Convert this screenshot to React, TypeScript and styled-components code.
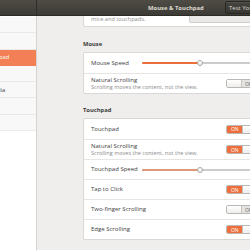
import React from 'react';
import styled, { createGlobalStyle } from 'styled-components';

const Global = createGlobalStyle`
  html, body { margin: 0; padding: 0; }
  body {
    width: 250px; height: 250px; overflow: hidden;
    background: #efeeec;
    font-family: "Open Sans", "Noto Sans", "DejaVu Sans", sans-serif;
    -webkit-font-smoothing: antialiased;
  }
`;

const Window = styled.div`
  width: 250px; height: 250px;
  display: flex; flex-direction: column;
  overflow: hidden;
`;

const HeaderBar = styled.header`
  flex: none;
  height: 16px;
  box-sizing: border-box;
  display: flex;
  background: linear-gradient(#4f4c46, #3d3b36);
  border-bottom: 1px solid #2c2b28;
`;

const HeaderSide = styled.div`
  width: 36px; flex: none;
  border-right: 1px solid #2e2d2a;
`;

const HeaderMain = styled.div`
  flex: 1;
  display: flex; align-items: center;
  padding-left: 111px;
  min-width: 0;
`;

const Title = styled.div`
  flex: none; width: 77px;
  color: #dfdbd2;
  font-weight: 700;
  font-size: 5.9px;
  line-height: 8px;
  white-space: nowrap;
`;

const HeaderButton = styled.div`
  flex: none;
  height: 13px;
  box-sizing: border-box;
  display: flex; align-items: center;
  padding: 0 3px;
  border: 1px solid #27261f;
  border-radius: 2px;
  background: linear-gradient(#46443f, #393733);
  box-shadow: inset 0 1px 0 rgba(255,255,255,0.08);
  color: #dfdbd2;
  font-size: 6px;
  line-height: 8px;
  white-space: nowrap;
`;

const Body = styled.div`
  flex: 1;
  display: flex;
  min-height: 0;
`;

const Sidebar = styled.nav`
  width: 36px; flex: none;
  background: #ffffff;
  border-right: 1px solid #d5d4d2;
  padding-top: 1px;
  overflow: hidden;
`;

const SideRow = styled.div<{ $selected?: boolean }>`
  height: 16.3px;
  box-sizing: border-box;
  display: flex; align-items: center;
  background: ${p => (p.$selected ? '#f27f55' : '#f8f8f8')};
  border-bottom: 1px solid ${p => (p.$selected ? '#f27f55' : '#e9e9e9')};
  color: ${p => (p.$selected ? '#ffffff' : '#3c3c3c')};
  font-size: 5.8px;
  white-space: nowrap;
`;

const SideLabel = styled.span`
  margin-left: -43px;
`;

const Content = styled.main`
  flex: 1;
  padding-left: 46px;
  overflow: hidden;
  min-width: 0;
`;

const Column = styled.div`
  width: 183px;
`;

const Frame = styled.section`
  background: #ffffff;
  border: 1px solid #d9d8d6;
  border-radius: 2px;
`;

const TopFrame = styled(Frame)`
  margin-top: -14px;
  height: 25px;
  box-sizing: border-box;
  display: flex;
  align-items: flex-end;
  padding: 0 0 4px 7px;
`;

const Description = styled.div`
  flex: 1;
  color: #8b8b8b;
  font-size: 5.6px;
  line-height: 6px;
  white-space: nowrap;
`;

const HiddenButton = styled.div`
  flex: none;
  align-self: flex-start;
  margin-top: 10px;
  width: 76px;
  height: 10px;
  box-sizing: border-box;
  border: 1px solid #cfcecc;
  border-top: none;
  background: #e9e8e6;
  border-radius: 0 0 2px 2px;
`;

const Heading = styled.h2<{ $top: number }>`
  margin: ${p => p.$top}px 0 4px 0;
  height: 8px;
  line-height: 8px;
  font-size: 5.8px;
  font-weight: 700;
  color: #3c3c3c;
`;

const Row = styled.div`
  height: 20px;
  box-sizing: border-box;
  display: flex;
  align-items: center;
  padding: 0 7px;
  & + & { border-top: 1px solid #e6e5e3; }
`;

const LabelBlock = styled.div`
  flex: 1;
  min-width: 0;
  display: flex;
  flex-direction: column;
`;

const Label = styled.div<{ $width?: number }>`
  ${p => (p.$width ? `width: ${p.$width}px; flex: none;` : '')}
  color: #3c3c3c;
  font-size: 6px;
  line-height: 6.5px;
  white-space: nowrap;
`;

const SubLabel = styled.div`
  color: #8b8b8b;
  font-size: 5.5px;
  line-height: 6px;
  white-space: nowrap;
`;

const SwitchBox = styled.div`
  flex: none;
  width: 32px;
  height: 9px;
  box-sizing: border-box;
  display: flex;
  border: 1px solid #b9b8b5;
  border-radius: 2px;
  overflow: hidden;
`;

const SwitchOn = styled.div`
  width: 16px;
  display: flex; align-items: center; justify-content: center;
  background: #ee6f3d;
  color: #ffffff;
  font-size: 5px;
`;

const SwitchOff = styled.div`
  flex: 1;
  display: flex; align-items: center; justify-content: center;
  background: #e4e3e1;
  color: #6a6a6a;
  font-size: 5px;
`;

const Knob = styled.div`
  width: 15px;
  background: linear-gradient(#ffffff, #eeedeb);
  border-left: 1px solid #c4c3c0;
  border-right: 1px solid #c4c3c0;
  box-sizing: border-box;
  &:first-child { border-left: none; }
  &:last-child { border-right: none; }
`;

const Switch = ({ on }: { on: boolean }) =>
  on ? (
    <SwitchBox>
      <SwitchOn>ON</SwitchOn>
      <Knob />
    </SwitchBox>
  ) : (
    <SwitchBox>
      <Knob />
      <SwitchOff>OFF</SwitchOff>
    </SwitchBox>
  );

const Track = styled.div`
  flex: 1;
  position: relative;
  height: 2px;
  background: #cdccca;
  border-radius: 1px;
`;

const Fill = styled.div<{ $color: string }>`
  height: 100%;
  background: ${p => p.$color};
  border-radius: 1px;
`;

const Thumb = styled.div`
  position: absolute;
  top: 50%;
  width: 6px; height: 6px;
  margin: -3px 0 0 -3px;
  box-sizing: border-box;
  border-radius: 50%;
  border: 1px solid #a9a8a5;
  background: linear-gradient(#ffffff, #ecebe9);
`;

const Slider = ({ value, color }: { value: number; color: string }) => (
  <Track>
    <Fill $color={color} style={{ width: `${value}%` }} />
    <Thumb style={{ left: `${value}%` }} />
  </Track>
);

const sidebarItems = ['Displays', 'Keyboard', 'Mouse & Touchpad', 'Printers', 'Removable Media', 'Color', 'Wacom Tablet'];

export default function App() {
  return (
    <>
      <Global />
      <Window>
        <HeaderBar>
          <HeaderSide />
          <HeaderMain>
            <Title>Mouse &amp; Touchpad</Title>
            <HeaderButton>Test Your Settings</HeaderButton>
          </HeaderMain>
        </HeaderBar>
        <Body>
          <Sidebar>
            {sidebarItems.map(item => (
              <SideRow key={item} $selected={item === 'Mouse & Touchpad'}>
                <SideLabel>{item}</SideLabel>
              </SideRow>
            ))}
          </Sidebar>
          <Content>
            <Column>
              <TopFrame>
                <Description>mice and touchpads.</Description>
                <HiddenButton />
              </TopFrame>

              <Heading $top={13}>Mouse</Heading>
              <Frame>
                <Row>
                  <Label $width={51}>Mouse Speed</Label>
                  <Slider value={50} color="#e9703c" />
                </Row>
                <Row>
                  <LabelBlock>
                    <Label>Natural Scrolling</Label>
                    <SubLabel>Scrolling moves the content, not the view.</SubLabel>
                  </LabelBlock>
                  <Switch on={false} />
                </Row>
              </Frame>

              <Heading $top={12}>Touchpad</Heading>
              <Frame>
                <Row>
                  <LabelBlock><Label>Touchpad</Label></LabelBlock>
                  <Switch on />
                </Row>
                <Row>
                  <LabelBlock>
                    <Label>Natural Scrolling</Label>
                    <SubLabel>Scrolling moves the content, not the view.</SubLabel>
                  </LabelBlock>
                  <Switch on />
                </Row>
                <Row>
                  <Label $width={51}>Touchpad Speed</Label>
                  <Slider value={50} color="#dc9878" />
                </Row>
                <Row>
                  <LabelBlock><Label>Tap to Click</Label></LabelBlock>
                  <Switch on />
                </Row>
                <Row>
                  <LabelBlock><Label>Two-finger Scrolling</Label></LabelBlock>
                  <Switch on={false} />
                </Row>
                <Row>
                  <LabelBlock><Label>Edge Scrolling</Label></LabelBlock>
                  <Switch on />
                </Row>
              </Frame>
            </Column>
          </Content>
        </Body>
      </Window>
    </>
  );
}
